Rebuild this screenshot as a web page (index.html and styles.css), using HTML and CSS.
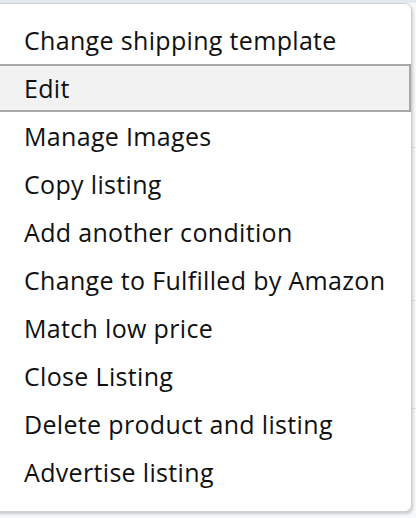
FILE: index.html
```html
<!DOCTYPE html>
<html>
<head>
<meta charset="utf-8">
<link rel="stylesheet" href="styles.css">
</head>
<body>
<div class="page">
  <div class="backdrop">
    <span class="rule r1"></span>
    <span class="rule r2"></span>
    <span class="rule r3"></span>
  </div>
  <ul class="menu">
    <li class="item">Change shipping template</li>
    <li class="item active">Edit</li>
    <li class="item">Manage Images</li>
    <li class="item">Copy listing</li>
    <li class="item">Add another condition</li>
    <li class="item">Change to Fulfilled by Amazon</li>
    <li class="item">Match low price</li>
    <li class="item">Close Listing</li>
    <li class="item">Delete product and listing</li>
    <li class="item">Advertise listing</li>
  </ul>
</div>
</body>
</html>
```
FILE: styles.css
```css
html, body {
  margin: 0;
  padding: 0;
}
body {
  width: 416px;
  height: 518px;
  overflow: hidden;
  background: #ffffff;
  font-family: "Open Sans", "Liberation Sans", sans-serif;
}
.page {
  position: relative;
  width: 416px;
  height: 518px;
  padding-top: 3px;
  box-sizing: border-box;
  background: linear-gradient(#e4e9ee, #e4e9ee) top/100% 3px no-repeat, #f7f8f9;
}
.backdrop {
  position: absolute;
  right: 0;
  top: 0;
  width: 6px;
  height: 518px;
}
.rule {
  position: absolute;
  left: 0;
  right: 0;
  height: 1px;
  background: #e2e2e2;
}
.r1 { top: 147px; }
.r2 { top: 300px; }
.r3 { top: 408px; }
.menu {
  position: relative;
  list-style: none;
  margin: 0 0 0 -10px;
  padding: 12px 0 15px 0;
  width: 422px;
  box-sizing: border-box;
  background: #ffffff;
  border: 1px solid #cfcfcf;
  border-radius: 7px;
  box-shadow: 1px 2px 3px rgba(0, 0, 0, 0.18);
}
.item {
  height: 48px;
  display: flex;
  align-items: center;
  padding-left: 33px;
  box-sizing: border-box;
  font-size: 25px;
  color: #0f1111;
  letter-spacing: 0.33px;
}
.item.active {
  background: #f2f2f2;
  border: 2px solid #a8a8a8;
  padding-left: 31px;
}
```
